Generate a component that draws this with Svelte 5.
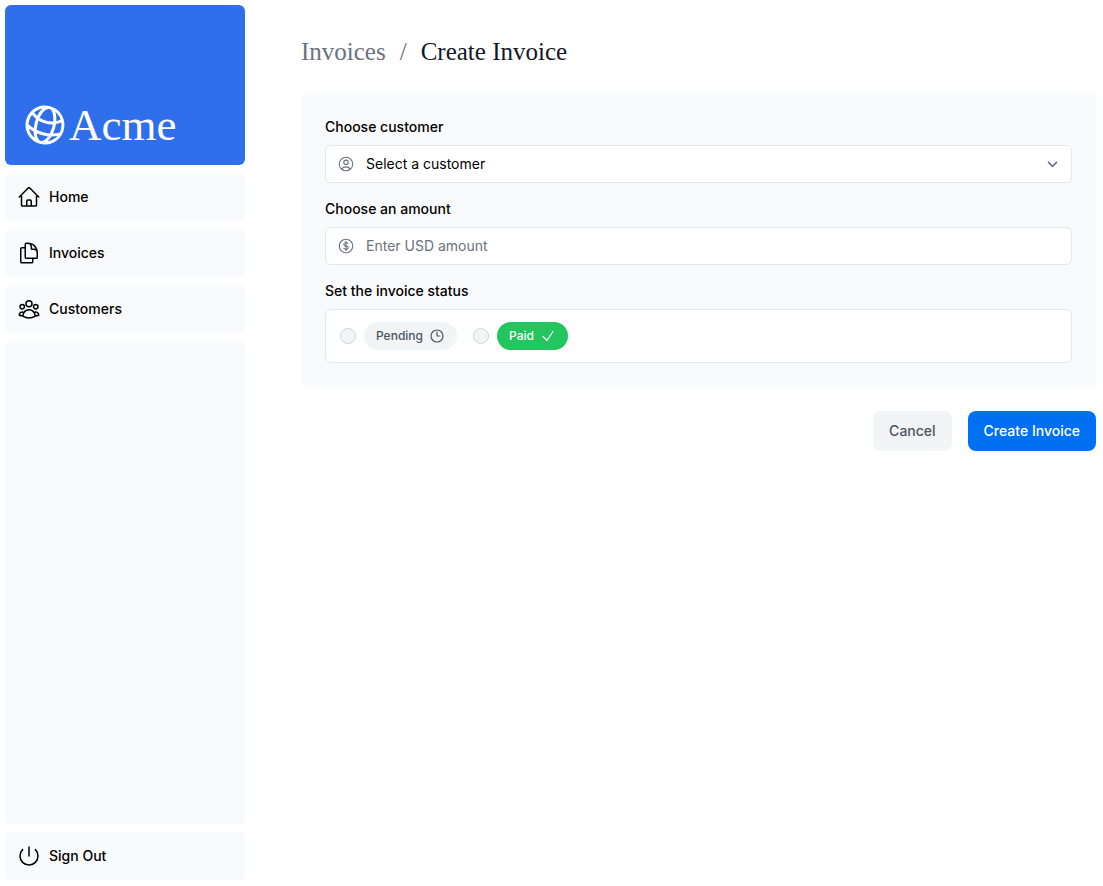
<script>
  const links = [
    {
      label: 'Home',
      icon: 'm2.25 12 8.954-8.955c.44-.439 1.152-.439 1.591 0L21.75 12M4.5 9.75v10.125c0 .621.504 1.125 1.125 1.125H9.75v-4.875c0-.621.504-1.125 1.125-1.125h2.25c.621 0 1.125.504 1.125 1.125V21h4.125c.621 0 1.125-.504 1.125-1.125V9.75M8.25 21h8.25'
    },
    {
      label: 'Invoices',
      icon: 'M15.75 17.25v3.375c0 .621-.504 1.125-1.125 1.125h-9.75a1.125 1.125 0 0 1-1.125-1.125V7.875c0-.621.504-1.125 1.125-1.125H6.75a9.06 9.06 0 0 1 1.5.124m7.5 10.376h3.375c.621 0 1.125-.504 1.125-1.125V11.25c0-4.46-3.243-8.161-7.5-8.876a9.06 9.06 0 0 0-1.5-.124H9.375c-.621 0-1.125.504-1.125 1.125v3.5m7.5 10.375H9.375a1.125 1.125 0 0 1-1.125-1.125v-9.25m12 6.625v-1.875a3.375 3.375 0 0 0-3.375-3.375h-1.5a1.125 1.125 0 0 1-1.125-1.125v-1.5a3.375 3.375 0 0 0-3.375-3.375H9.75'
    },
    {
      label: 'Customers',
      icon: 'M18 18.72a9.094 9.094 0 0 0 3.741-.479 3 3 0 0 0-4.682-2.72m.94 3.198.001.031c0 .225-.012.447-.037.666A11.944 11.944 0 0 1 12 21c-2.17 0-4.207-.576-5.963-1.584A6.062 6.062 0 0 1 6 18.719m12 0a5.971 5.971 0 0 0-.941-3.197m0 0A5.995 5.995 0 0 0 12 12.75a5.995 5.995 0 0 0-5.058 2.772m0 0a3 3 0 0 0-4.681 2.72 8.986 8.986 0 0 0 3.74.477m.94-3.197a5.971 5.971 0 0 0-.94 3.197M15 6.75a3 3 0 1 1-6 0 3 3 0 0 1 6 0Zm6 3a2.25 2.25 0 1 1-4.5 0 2.25 2.25 0 0 1 4.5 0Zm-13.5 0a2.25 2.25 0 1 1-4.5 0 2.25 2.25 0 0 1 4.5 0Z'
    }
  ];

  const globe =
    'M12 21a9.004 9.004 0 0 0 8.716-6.747M12 21a9.004 9.004 0 0 1-8.716-6.747M12 21c2.485 0 4.5-4.03 4.5-9S14.485 3 12 3m0 18c-2.485 0-4.5-4.03-4.5-9S9.515 3 12 3m0 0a8.997 8.997 0 0 1 7.843 4.582M12 3a8.997 8.997 0 0 0-7.843 4.582m15.686 0A11.953 11.953 0 0 1 12 10.5c-2.998 0-5.74-1.1-7.843-2.918m15.686 0A8.959 8.959 0 0 1 21 12c0 .778-.099 1.533-.284 2.253m0 0A17.919 17.919 0 0 1 12 16.5c-3.162 0-6.133-.815-8.716-2.247m0 0A9.015 9.015 0 0 1 3 12c0-1.605.42-3.113 1.157-4.418';
  const power = 'M5.636 5.636a9 9 0 1 0 12.728 0M12 3v9';
  const user =
    'M17.982 18.725A7.488 7.488 0 0 0 12 15.75a7.488 7.488 0 0 0-5.982 2.975m11.963 0a9 9 0 1 0-11.963 0m11.963 0A8.966 8.966 0 0 1 12 21a8.966 8.966 0 0 1-5.982-2.275M15 9.75a3 3 0 1 1-6 0 3 3 0 0 1 6 0Z';
  const dollar =
    'M12 6v12m-3-2.818.879.659c1.171.879 3.07.879 4.242 0 1.172-.879 1.172-2.303 0-3.182C13.536 12.219 12.768 12 12 12c-.725 0-1.45-.22-2.003-.659-1.106-.879-1.106-2.303 0-3.182s2.9-.879 4.006 0l.415.33M21 12a9 9 0 1 1-18 0 9 9 0 0 1 18 0Z';
  const clock = 'M12 6v6h4.5m4.5 0a9 9 0 1 1-18 0 9 9 0 0 1 18 0Z';
  const check = 'm4.5 12.75 6 6 9-13.5';
  const chevron = 'm5.25 9.5 6 6 6-6';
</script>

{#snippet icon(path, kind)}
  <svg class="icon {kind}" viewBox="0 0 24 24" aria-hidden="true"><path d={path} /></svg>
{/snippet}

<div class="page">
  <aside>
    <a class="brand" href="#home">
      {@render icon(globe, 'globe')}
      <span>Acme</span>
    </a>
    <nav>
      {#each links as link}
        <a class="tile" href="#{link.label.toLowerCase()}">
          {@render icon(link.icon, 'large')}
          {link.label}
        </a>
      {/each}
    </nav>
    <div class="filler"></div>
    <button class="tile" type="button">
      {@render icon(power, 'large')}
      Sign Out
    </button>
  </aside>

  <main>
    <h1>
      <a href="#invoices">Invoices</a>
      <span class="slash">/</span>
      <span>Create Invoice</span>
    </h1>

    <form onsubmit={(e) => e.preventDefault()}>
      <div class="panel">
        <div class="group">
          <label for="customer">Choose customer</label>
          <div class="field">
            {@render icon(user, 'lead')}
            <select id="customer">
              <option value="">Select a customer</option>
            </select>
            {@render icon(chevron, 'chevron')}
          </div>
        </div>

        <div class="group">
          <label for="amount">Choose an amount</label>
          <div class="field">
            {@render icon(dollar, 'lead')}
            <input id="amount" type="text" inputmode="decimal" placeholder="Enter USD amount" />
          </div>
        </div>

        <fieldset>
          <legend>Set the invoice status</legend>
          <div class="statuses">
            <div class="status">
              <input id="pending" type="radio" name="status" value="pending" />
              <label class="pill pending" for="pending">Pending {@render icon(clock, 'small')}</label>
            </div>
            <div class="status">
              <input id="paid" type="radio" name="status" value="paid" />
              <label class="pill paid" for="paid">Paid {@render icon(check, 'small')}</label>
            </div>
          </div>
        </fieldset>
      </div>

      <div class="actions">
        <a class="action cancel" href="#invoices">Cancel</a>
        <button class="action create" type="submit">Create Invoice</button>
      </div>
    </form>
  </main>
</div>

<style>
  :global(body) {
    background: #fff;
  }

  .page,
  .page * {
    box-sizing: border-box;
  }

  .page {
    display: flex;
    gap: 56px;
    min-height: 100vh;
    padding: 5px 7px 6px 5px;
    color: #000;
    font-family: Inter, 'Liberation Sans', sans-serif;
    font-size: 14px;
    line-height: 20px;
  }

  a {
    color: inherit;
    text-decoration: none;
  }

  button,
  input,
  select {
    margin: 0;
    font: inherit;
    color: inherit;
  }

  .icon {
    flex: none;
    fill: none;
    stroke: currentColor;
    stroke-width: 1.5;
    stroke-linecap: round;
    stroke-linejoin: round;
  }

  .large {
    width: 24px;
    height: 24px;
  }

  .small {
    width: 16px;
    height: 16px;
    stroke-width: 1.8;
  }

  aside {
    display: flex;
    flex: none;
    flex-direction: column;
    gap: 8px;
    width: 240px;
  }

  .brand {
    display: flex;
    align-items: flex-end;
    height: 160px;
    padding: 16px;
    border-radius: 6px;
    background: #2f6feb;
    color: #fff;
    font-family: 'Liberation Serif', serif;
    font-size: 45px;
    line-height: 48px;
  }

  .globe {
    width: 48px;
    height: 48px;
    transform: rotate(15deg);
  }

  nav {
    display: flex;
    flex-direction: column;
    gap: 8px;
  }

  .tile {
    display: flex;
    align-items: center;
    gap: 8px;
    width: 100%;
    height: 48px;
    padding: 12px;
    border: 0;
    border-radius: 6px;
    background: #f9fafb;
    font-weight: 500;
  }

  .filler {
    flex: 1;
    border-radius: 6px;
    background: #f9fafb;
  }

  main {
    flex: 1;
    min-width: 0;
    padding-top: 32px;
  }

  h1 {
    display: flex;
    gap: 14px;
    margin: 0 0 26px;
    color: #111827;
    font-family: 'Liberation Serif', serif;
    font-size: 25px;
    font-weight: 400;
    line-height: 30px;
  }

  h1 a,
  .slash {
    color: #6b7280;
  }

  .panel {
    padding: 24px;
    border-radius: 6px;
    background: #f9fafb;
  }

  .group {
    margin-bottom: 16px;
  }

  .group label,
  legend {
    display: block;
    margin-bottom: 8px;
    padding: 0;
    font-weight: 500;
  }

  .field {
    position: relative;
  }

  .field select,
  .field input {
    display: block;
    width: 100%;
    height: 38px;
    padding: 8px 40px;
    border: 1px solid #e5e7eb;
    border-radius: 6px;
    background: #fff;
    appearance: none;
  }

  .field input {
    padding-bottom: 10px;
  }

  .field input::placeholder {
    color: #6b7280;
    opacity: 1;
  }

  .lead,
  .chevron {
    position: absolute;
    top: 10px;
    color: #6b7280;
    pointer-events: none;
  }

  .lead {
    left: 12px;
    width: 18px;
    height: 18px;
  }

  .chevron {
    top: 11px;
    right: 11px;
    width: 16px;
    height: 16px;
    stroke-width: 2.4;
  }

  fieldset {
    min-width: 0;
    margin: 0;
    padding: 0;
    border: 0;
  }

  .statuses {
    display: flex;
    gap: 16px;
    padding: 12px 14px;
    border: 1px solid #e5e7eb;
    border-radius: 6px;
    background: #fff;
  }

  .status {
    display: flex;
    align-items: center;
    gap: 8px;
  }

  .status input {
    width: 16px;
    height: 16px;
    border: 1px solid #d1d5db;
    border-radius: 50%;
    background: #f3f4f6;
    appearance: none;
  }

  .status input:checked {
    border: 5px solid #2f6feb;
  }

  .pill {
    display: flex;
    align-items: center;
    gap: 6px;
    padding: 6px 12px;
    border-radius: 14px;
    font-size: 12px;
    font-weight: 500;
    line-height: 16px;
  }

  .pending {
    background: #f3f4f6;
    color: #4b5563;
  }

  .paid {
    background: #22c55e;
    color: #fff;
  }

  .actions {
    display: flex;
    justify-content: flex-end;
    gap: 16px;
    margin-top: 24px;
  }

  .action {
    display: flex;
    align-items: center;
    height: 40px;
    padding: 0 16px;
    border: 0;
    border-radius: 8px;
    font-weight: 500;
  }

  .cancel {
    background: #f3f4f6;
    color: #4b5563;
  }

  .create {
    background: #0070f3;
    color: #fff;
  }
</style>
